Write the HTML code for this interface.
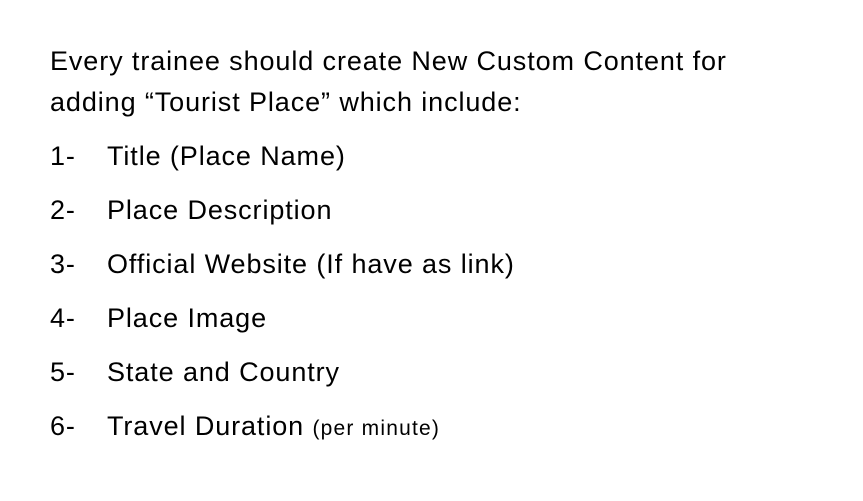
<!DOCTYPE html>
<html><head><meta charset="utf-8"><style>
body{margin:0;width:863px;height:501px;background:#fff;overflow:hidden;font-family:"Liberation Sans",Arial,sans-serif;color:#000}
.l{position:absolute;font-size:27px;letter-spacing:0.9px;line-height:30px;white-space:nowrap;left:50px}
.n{position:absolute;left:50px}
.t{position:absolute;left:107px}
small{font-size:21px;letter-spacing:1.2px}
</style></head><body>
<div class="l" style="top:46px">Every trainee should create New Custom Content for</div>
<div class="l" style="top:87px">adding “Tourist Place” which include:</div>
<div class="l" style="top:141px;left:0;width:863px"><span class="n">1-</span><span class="t">Title (Place Name)</span></div>
<div class="l" style="top:195px;left:0;width:863px"><span class="n">2-</span><span class="t">Place Description</span></div>
<div class="l" style="top:249px;left:0;width:863px"><span class="n">3-</span><span class="t">Official Website (If have as link)</span></div>
<div class="l" style="top:303px;left:0;width:863px"><span class="n">4-</span><span class="t">Place Image</span></div>
<div class="l" style="top:357px;left:0;width:863px"><span class="n">5-</span><span class="t">State and Country</span></div>
<div class="l" style="top:411px;left:0;width:863px"><span class="n">6-</span><span class="t">Travel Duration <small>(per minute)</small></span></div>
</body></html>
